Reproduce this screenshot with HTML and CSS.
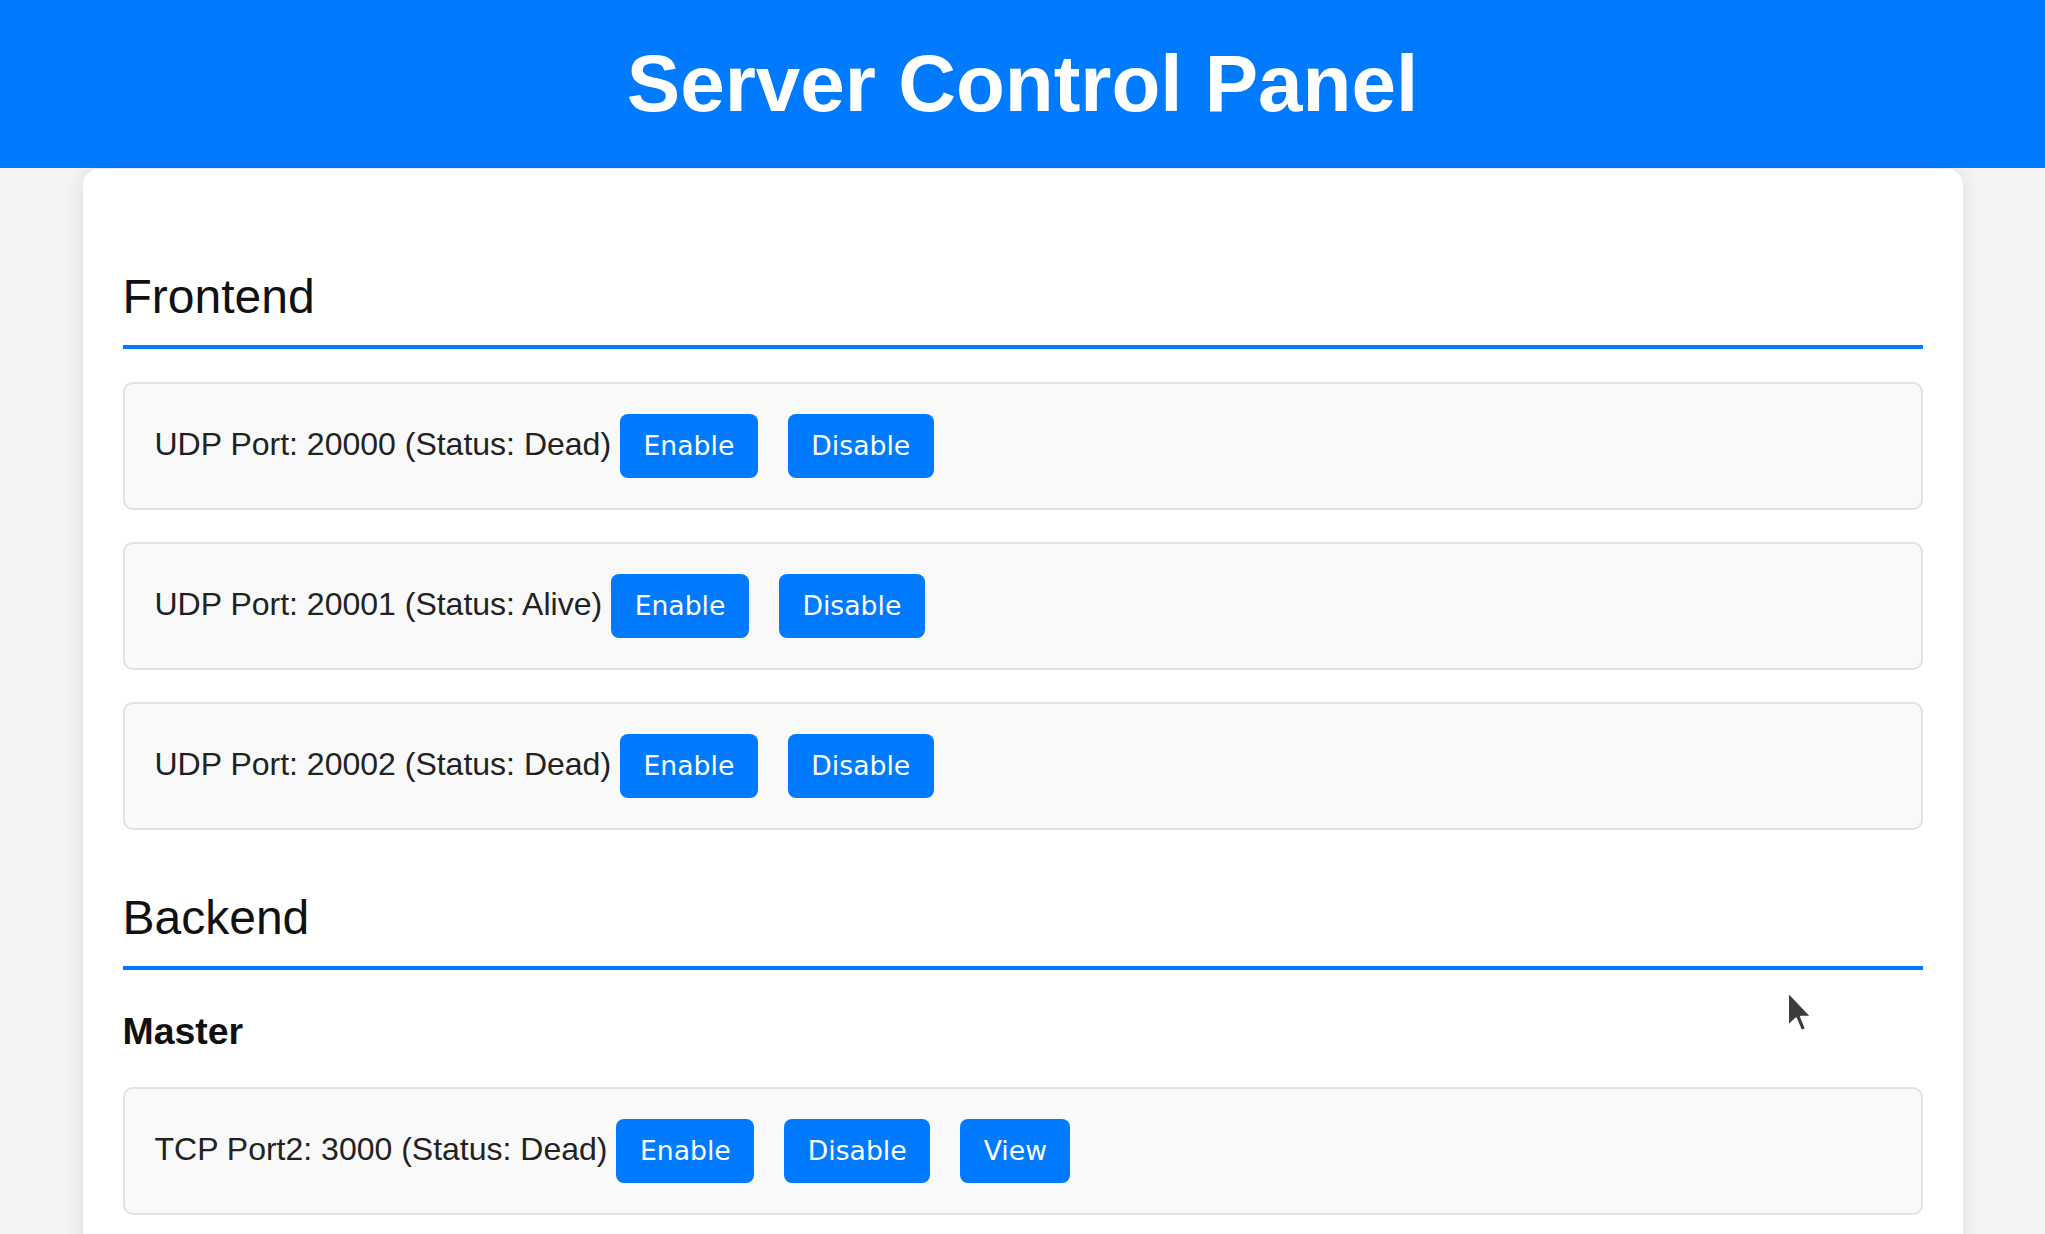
FILE: index.html
```html
<!DOCTYPE html>
<html lang="en">
<head>
<meta charset="utf-8">
<title>Server Control Panel</title>
<link rel="stylesheet" href="styles.css">
</head>
<body>
<header class="header">
  <h1 class="title">Server Control Panel</h1>
</header>
<main class="container">
  <section class="section">
    <h2 class="section-title">Frontend</h2>
    <div class="port-row">
      <span class="port-label">UDP Port: 20000 (Status: Dead)</span>
      <button class="btn">Enable</button>
      <button class="btn">Disable</button>
    </div>
    <div class="port-row">
      <span class="port-label">UDP Port: 20001 (Status: Alive)</span>
      <button class="btn">Enable</button>
      <button class="btn">Disable</button>
    </div>
    <div class="port-row">
      <span class="port-label">UDP Port: 20002 (Status: Dead)</span>
      <button class="btn">Enable</button>
      <button class="btn">Disable</button>
    </div>
  </section>
  <section class="section">
    <h2 class="section-title">Backend</h2>
    <h3 class="sub-title">Master</h3>
    <div class="port-row">
      <span class="port-label">TCP Port2: 3000 (Status: Dead)</span>
      <button class="btn">Enable</button>
      <button class="btn">Disable</button>
      <button class="btn">View</button>
    </div>
  </section>
</main>
<svg class="cursor" width="30" height="50" viewBox="0 0 15 25" aria-hidden="true">
  <path d="M1 1 L1 18 L5 14.2 L7.6 20.4 L10 19.4 L7.5 13.4 L12.8 13.4 Z" fill="#3c3c3c" stroke="#ffffff" stroke-width="1" stroke-linejoin="round"/>
</svg>
</body>
</html>
```

FILE: styles.css
```css
html, body {
  margin: 0;
  padding: 0;
}

body {
  position: relative;
  background: #f4f4f4;
  font-family: "Liberation Sans", Arial, sans-serif;
  font-size: 32px;
  color: #333;
}

.header {
  background: #007bff;
  padding: 38px 0;
  text-align: center;
}

.title {
  margin: 0;
  font-size: 80px;
  line-height: 92px;
  font-weight: bold;
  color: #fff;
}

.container {
  box-sizing: border-box;
  width: 1880px;
  margin: 1px auto 0;
  padding: 40px;
  background: #fff;
  border-radius: 16px;
  box-shadow: 0 0 20px rgba(0, 0, 0, 0.1);
}

.section-title {
  margin: 60px 0 33px;
  padding-bottom: 21px;
  border-bottom: 4px solid #007bff;
  font-size: 48px;
  font-weight: normal;
  color: #111;
}

.sub-title {
  margin: 40px 0 34px;
  font-size: 37.44px;
  font-weight: bold;
  color: #111;
}

.port-row {
  display: flex;
  align-items: baseline;
  margin: 32px 0;
  padding: 30px;
  background: #f9f9f9;
  border: 2px solid #e2e2e2;
  border-radius: 10px;
}

.port-label {
  margin-right: 9px;
  color: #222;
}

.btn {
  padding: 16px 23.5px;
  border: 0;
  border-radius: 8px;
  background: #007bff;
  color: #fff;
  font-family: "DejaVu Sans", sans-serif;
  font-size: 26.67px;
  line-height: 32px;
}

.btn + .btn {
  margin-left: 30px;
}

.cursor {
  position: absolute;
  left: 1786px;
  top: 990px;
}
```
